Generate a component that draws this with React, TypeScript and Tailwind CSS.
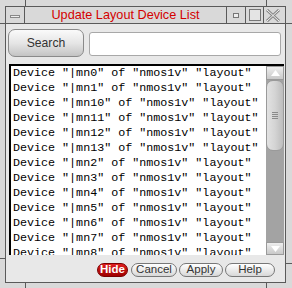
const rows = ['0', '1', '10', '11', '12', '13', '2', '3', '4', '5', '6', '7', '8'];

function TitleBar() {
  return (
    <div className="flex h-[17px] border-b border-[#5a5a5a] bg-[#d9d9d9]">
      <div className="flex w-[19px] items-center justify-center border-r border-[#5a5a5a]">
        <div className="mt-[2px] h-[3px] w-[10px] border border-[#888] bg-[#eee]" />
      </div>
      <div className="flex w-[202px] items-center justify-center border-r border-[#5a5a5a] pt-[1px] text-[12.7px] leading-none text-[#d40000]">
        Update Layout Device List
      </div>
      <div className="flex w-[19px] items-center justify-center border-r border-[#5a5a5a]">
        <div className="mt-[1px] h-[5px] w-[6px] border border-[#777] bg-[#eee]" />
      </div>
      <div className="flex w-[18px] items-center justify-center border-r border-[#5a5a5a]">
        <div className="h-[12px] w-[12px] border border-[#777] bg-[#e4e4e4]" />
      </div>
      <div className="flex w-[17px] items-center justify-center">
        <svg width="14" height="13" viewBox="0 0 14 13">
          <path d="M1 1 L13 12 M13 1 L1 12" stroke="#888" strokeWidth="3" />
          <path d="M1 1 L13 12 M13 1 L1 12" stroke="#f4f4f4" strokeWidth="1" />
        </svg>
      </div>
    </div>
  );
}

function ScrollBar() {
  return (
    <div className="flex w-[18px] flex-col bg-[#a3a3a3]">
      <div className="flex h-[14px] items-center justify-center border border-[#9a9a9a] bg-gradient-to-b from-[#eeeeee] to-[#c9c9c9]">
        <svg width="9" height="6" viewBox="0 0 9 6">
          <path d="M4.5 0 L9 6 L0 6 Z" fill="#ffffff" />
        </svg>
      </div>
      <div className="flex h-[71px] items-center justify-center rounded-[7px] border border-[#9a9a9a] bg-gradient-to-r from-[#e2e2e2] via-[#d4d4d4] to-[#bdbdbd]">
        <div className="flex flex-col gap-[1px]">
          <div className="h-px w-[6px] bg-[#8a8a8a]" />
          <div className="h-px w-[6px] bg-[#8a8a8a]" />
          <div className="h-px w-[6px] bg-[#8a8a8a]" />
          <div className="h-px w-[6px] bg-[#8a8a8a]" />
        </div>
      </div>
      <div className="flex-1" />
      <div className="flex h-[13px] items-center justify-center border border-[#9a9a9a] bg-gradient-to-b from-[#eeeeee] to-[#c9c9c9]">
        <svg width="9" height="6" viewBox="0 0 9 6">
          <path d="M0 0 L9 0 L4.5 6 Z" fill="#ffffff" />
        </svg>
      </div>
    </div>
  );
}

function PillButton({ label, width }: { label: string; width: string }) {
  return (
    <button
      className={`flex h-[14px] items-center justify-center rounded-[7px] border border-[#777] bg-gradient-to-b from-[#ffffff] to-[#d8d8d8] text-[11.5px] leading-none text-[#333] ${width}`}
    >
      {label}
    </button>
  );
}

export default function App() {
  return (
    <div className="relative h-[288px] w-[292px] bg-[#d9d9d9] pb-[5px] pl-[5px] pr-[6px] pt-[6px] font-['Liberation_Sans',Arial,sans-serif]">
      {/* frame corner ticks */}
      <div className="absolute left-[25px] top-0 h-[6px] w-px bg-[#5a5a5a]" />
      <div className="absolute left-[266px] top-0 h-[6px] w-px bg-[#5a5a5a]" />
      <div className="absolute bottom-0 left-[25px] h-[5px] w-px bg-[#5a5a5a]" />
      <div className="absolute bottom-0 left-[266px] h-[5px] w-px bg-[#5a5a5a]" />
      <div className="absolute left-0 top-[23px] h-px w-[5px] bg-[#5a5a5a]" />
      <div className="absolute left-0 top-[258px] h-px w-[5px] bg-[#5a5a5a]" />
      <div className="absolute right-0 top-[23px] h-px w-[6px] bg-[#5a5a5a]" />
      <div className="absolute right-0 top-[263px] h-px w-[6px] bg-[#5a5a5a]" />

      <div className="flex h-full flex-col border border-[#5a5a5a]">
        <TitleBar />
        <div className="flex flex-1 flex-col bg-[#e8e8e8]">
          <div className="mt-[5px] flex items-start pl-[2px]">
            <button className="flex h-[28px] w-[76px] items-center justify-center rounded-[7px] border border-[#8a8a8a] bg-gradient-to-b from-[#fafafa] via-[#e6e6e6] to-[#c4c4c4] text-[12.2px] text-[#333]">
              Search
            </button>
            <div className="ml-[5px] mt-[3px] h-[24px] w-[192px] rounded-[3px] border border-[#a8a8a8] bg-white" />
          </div>

          <div className="ml-[3px] mr-px mt-[7px] flex h-[191px] border-l-2 border-t-2 border-black bg-white">
            <div className="flex-1 overflow-hidden pl-[2px] font-['Liberation_Mono',monospace] text-[11.7px] leading-[15px] text-black">
              {rows.map((n) => (
                <div key={n} className="whitespace-pre">
                  {`Device "|mn${n}" of "nmos1v" "layout"`}
                </div>
              ))}
            </div>
            <ScrollBar />
          </div>

          <div className="mt-[8px] flex justify-end pr-[10px]">
            <button className="flex h-[14px] w-[31px] items-center justify-center rounded-[7px] border border-[#7a0000] bg-gradient-to-b from-[#e02020] to-[#a00000] text-[11.5px] font-bold leading-none text-white">
              Hide
            </button>
            <div className="ml-[3px]">
              <PillButton label="Cancel" width="w-[46px]" />
            </div>
            <div className="ml-[2px]">
              <PillButton label="Apply" width="w-[44px]" />
            </div>
            <div className="ml-[2px]">
              <PillButton label="Help" width="w-[50px]" />
            </div>
          </div>
        </div>
      </div>
    </div>
  );
}
